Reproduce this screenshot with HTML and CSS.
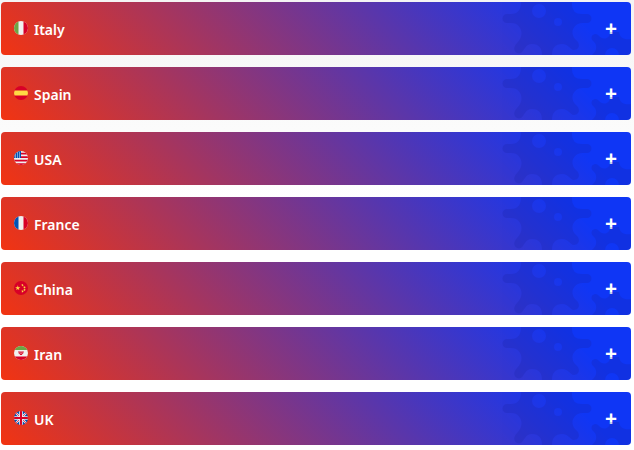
FILE: index.html
```html
<!DOCTYPE html>
<html lang="en">
<head>
<meta charset="utf-8">
<meta name="viewport" content="width=device-width, initial-scale=1">
<title>Countries</title>
<link rel="stylesheet" href="styles.css">
</head>
<body>
<svg class="defs" aria-hidden="true">
  <defs>
    <clipPath id="round"><circle cx="7" cy="7" r="7"/></clipPath>
    <symbol id="gears" viewBox="0 0 130 53">
      <path fill-rule="evenodd" d="M20 0Q20 12 10 12H6A4 4 0 0 0 6 21H10C21 21 24 34 16 41C10 47 15 53 20 51C24 48 24 42 31 42C38 42 41 46 41 53H51C51 46 54 42 61 42C68 42 69 48 73 48C78 48 80 42 75 38C67 30 74 21 81 21H86A4 4 0 0 0 86 12H81Q70 12 71 0ZM31 9a7 7 0 1 0 14 0a7 7 0 1 0-14 0M53 20a4 4 0 1 0 8 0a4 4 0 1 0-8 0"/>
      <path fill-rule="evenodd" d="M91 53C97 48 96 42 92 39C88 35 93 30 97 33C102 39 109 37 109 30H118C119 36 123 38 130 37V53H118A7 7 0 0 0 104 53Z"/>
    </symbol>
  </defs>
</svg>
<main class="countries">
  <button class="country" type="button" aria-expanded="false">
    <svg class="gears" aria-hidden="true"><use href="#gears"/></svg>
    <svg class="flag" viewBox="0 0 14 14" aria-hidden="true"><g clip-path="url(#round)"><path fill="#f0f0f0" d="M0 0h14v14H0z"/><path fill="#6da544" d="M0 0h4.500v14H0z"/><path fill="#d80027" d="M9.500 0H14v14H9.500z"/></g></svg>
    <span class="name">Italy</span>
    <span class="plus" aria-hidden="true">+</span>
  </button>
  <button class="country" type="button" aria-expanded="false">
    <svg class="gears" aria-hidden="true"><use href="#gears"/></svg>
    <svg class="flag" viewBox="0 0 14 14" aria-hidden="true"><g clip-path="url(#round)"><path fill="#d80027" d="M0 0h14v14H0z"/><path fill="#ffda44" d="M0 4.500h14v5H0z"/></g></svg>
    <span class="name">Spain</span>
    <span class="plus" aria-hidden="true">+</span>
  </button>
  <button class="country" type="button" aria-expanded="false">
    <svg class="gears" aria-hidden="true"><use href="#gears"/></svg>
    <svg class="flag" viewBox="0 0 14 14" aria-hidden="true"><g clip-path="url(#round)"><path fill="#f0f0f0" d="M0 0h14v14H0z"/><path fill="#d80027" d="M7 1.800h7v1.800H7zM7 5.200h7V7H7zM0 8.700h14v1.800H0zM0 12.200h14V14H0z"/><path fill="#0052b4" d="M0 0h7v7H0z"/><path fill="#f0f0f0" d="M3 1.500h1v1H3zM5 1.500h1v1H5zM1 3.500h1v1H1zM3 3.500h1v1H3zM5 3.500h1v1H5zM1 5.500h1v1H1zM3 5.500h1v1H3zM5 5.500h1v1H5z"/></g></svg>
    <span class="name">USA</span>
    <span class="plus" aria-hidden="true">+</span>
  </button>
  <button class="country" type="button" aria-expanded="false">
    <svg class="gears" aria-hidden="true"><use href="#gears"/></svg>
    <svg class="flag" viewBox="0 0 14 14" aria-hidden="true"><g clip-path="url(#round)"><path fill="#f0f0f0" d="M0 0h14v14H0z"/><path fill="#0052b4" d="M0 0h4.500v14H0z"/><path fill="#d80027" d="M9.500 0H14v14H9.500z"/></g></svg>
    <span class="name">France</span>
    <span class="plus" aria-hidden="true">+</span>
  </button>
  <button class="country" type="button" aria-expanded="false">
    <svg class="gears" aria-hidden="true"><use href="#gears"/></svg>
    <svg class="flag" viewBox="0 0 14 14" aria-hidden="true"><g clip-path="url(#round)"><path fill="#d80027" d="M0 0h14v14H0z"/><path fill="#ffda44" d="M3.800 4.300l.6 1.900h2L4.800 7.400l.6 1.900-1.600-1.200-1.600 1.200.6-1.900-1.600-1.200h2zM7.300 3.300l1 .2.500-.7.200 1 .9.400-.9.400v.9l-.6-.7-.9.300.5-.8zM9.500 5.300l.9.400.7-.6v1l.8.500-.9.200-.3.900-.5-.8h-.9l.6-.7zM9.500 7.800l.9.400.7-.6v1l.8.500-.9.200-.3.900-.5-.8h-.9l.6-.7zM7.300 9.500l1 .2.500-.7.200 1 .9.400-.9.400v.9l-.6-.7-.9.300.5-.8z"/></g></svg>
    <span class="name">China</span>
    <span class="plus" aria-hidden="true">+</span>
  </button>
  <button class="country" type="button" aria-expanded="false">
    <svg class="gears" aria-hidden="true"><use href="#gears"/></svg>
    <svg class="flag" viewBox="0 0 14 14" aria-hidden="true"><g clip-path="url(#round)"><path fill="#f0f0f0" d="M0 0h14v14H0z"/><path fill="#6da544" d="M0 0h14v4H0z"/><path fill="#d80027" d="M0 10.500h14V14H0z"/><path fill="none" stroke="#d80027" stroke-width="1" d="M4.900 5.300c0 2 .8 3.400 2.100 3.400s2.100-1.400 2.100-3.400M7 5.500v3.500M6 5.500v2M8 5.500v2"/></g></svg>
    <span class="name">Iran</span>
    <span class="plus" aria-hidden="true">+</span>
  </button>
  <button class="country" type="button" aria-expanded="false">
    <svg class="gears" aria-hidden="true"><use href="#gears"/></svg>
    <svg class="flag" viewBox="0 0 14 14" aria-hidden="true"><g clip-path="url(#round)"><path fill="#0052b4" d="M0 0h14v14H0z"/><path stroke="#f0f0f0" stroke-width="2" d="M0 0l14 14M14 0L0 14"/><path stroke="#d80027" stroke-width=".7" d="M0 0l14 14M14 0L0 14"/><path stroke="#f0f0f0" stroke-width="3.600" d="M7 0v14M0 7h14"/><path stroke="#d80027" stroke-width="2" d="M7 0v14M0 7h14"/></g></svg>
    <span class="name">UK</span>
    <span class="plus" aria-hidden="true">+</span>
  </button>
</main>
</body>
</html>
```

FILE: styles.css
```css
* {
  box-sizing: border-box;
}

body {
  margin: 0;
  min-height: 100vh;
  background: linear-gradient(#f4f4f4, #fff 45%);
  font-family: "Noto Sans", "Open Sans", sans-serif;
}

.defs {
  position: absolute;
  width: 0;
  height: 0;
}

.countries {
  display: flex;
  flex-direction: column;
  gap: 12px;
  padding: 2px 3px 4px 1px;
}

.country {
  position: relative;
  display: flex;
  align-items: center;
  gap: 6px;
  width: 100%;
  margin: 0;
  padding: 13px 14px 13px 13px;
  border: 0;
  border-radius: 4px;
  background: linear-gradient(45deg, #f23411, #1037f5 90%);
  color: #fff;
  font-family: inherit;
  font-size: 14px;
  font-weight: 600;
  line-height: 25px;
  text-align: left;
  overflow: hidden;
  cursor: pointer;
}

.gears {
  position: absolute;
  top: 0;
  right: 0;
  width: 130px;
  height: 53px;
  fill: #1822a0;
  opacity: 0.22;
}

.flag {
  flex: none;
  width: 14px;
  height: 14px;
  margin-bottom: 2px;
}

.name {
  flex: 1;
  padding-top: 2px;
}

.plus {
  font-size: 21px;
  font-weight: 700;
}
```
